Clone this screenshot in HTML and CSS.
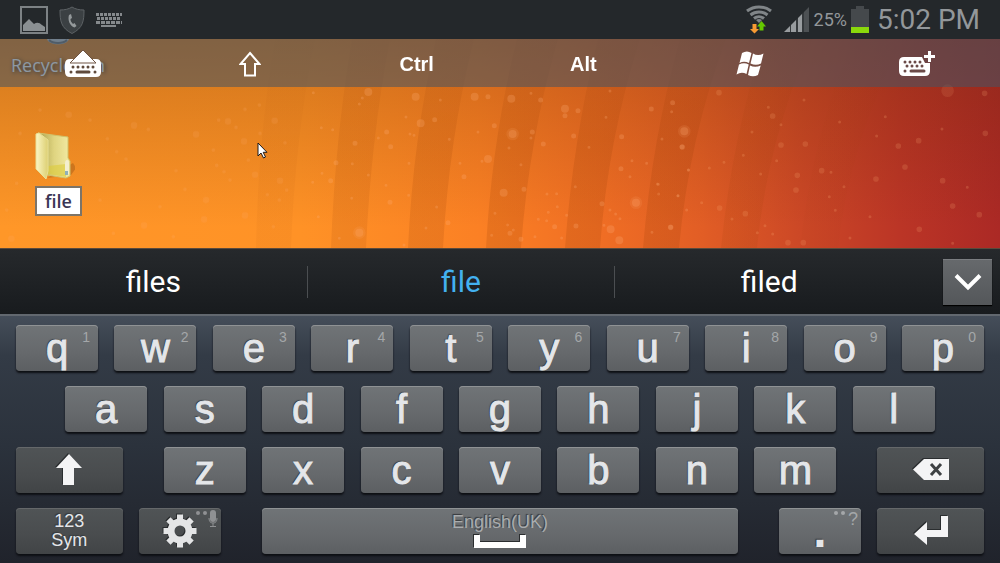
FILE: index.html
```html
<!doctype html>
<html lang="en">
<head>
    <meta charset="UTF-8">
    <title>Remote desktop</title>
    <link rel="stylesheet" href="styles.css">
</head>
<body>
    <header class="status">
        <div class="status-left">
            <svg width="28" height="28" viewBox="0 0 28 28">
                <rect x="1" y="1" width="26" height="26" fill="none" stroke="#7d8285" stroke-width="2"/>
                <path d="M3 25v-6l6-6 5 5q4-3 8 1l3 2v4z" fill="#8a8f92"/>
            </svg>
            <svg width="26" height="28" viewBox="0 0 26 28">
                <path d="M13 1c3 2 7 3 12 3 0 11-1 18-12 23.500C2 22 1 15 1 4c5 0 9-1 12-3z" fill="#3b4043" stroke="#5d6265"/>
                <path d="M10 9l2-1 1 4-1.500 1c0 2 1 3.500 2.500 5l1.500-1 2 3-2 1.500c-5-1.500-7-8-5.500-12.500z" fill="#94999b"/>
            </svg>
            <svg width="26" height="28" viewBox="0 0 26 28">
                <g stroke="#85898c" stroke-width="3" fill="none">
                    <path d="M0 8.500h26" stroke-dasharray="3 1"/>
                    <path d="M1 12.500h24" stroke-dasharray="3 1"/>
                    <path d="M0 16.500h26" stroke-dasharray="4 1"/>
                    <path d="M5 20h15" stroke-width="2"/>
                </g>
            </svg>
        </div>
        <div class="status-right">
            <svg width="26" height="29" viewBox="0 0 26 29">
                <g fill="none" stroke="#808588" stroke-width="3">
                    <path d="M1 6c7-5.500 17-5.500 24 0"/>
                    <path d="M4.500 10c5-4 12-4 17 0"/>
                    <path d="M8 13.500c3-2.500 7-2.500 10 0"/>
                </g>
                <path d="M13 18l-3-3c2-1.500 4-1.500 6 0z" fill="#808588"/>
                <path d="M6.500 19h4v5H13l-4.500 4.500L4 24h2.500z" fill="#f79a33"/>
                <path d="M13.500 25.500h4v-4H20L15.500 16 11 21.500h2.500z" fill="#65c800"/>
            </svg>
            <svg class="signal" width="25" height="25" viewBox="0 0 25 25">
                <path d="M0 25l6-6v6z" fill="#989c9f"/>
                <path d="M7 18l5-5v12H7z" fill="#989c9f"/>
                <path d="M14 11l4-4v18h-4z" fill="#989c9f"/>
                <path d="M20 5l5-5v25h-5z" fill="#4d5154"/>
                <path d="M6 19l1-1v7H6zM12 13l2-2v14h-2zM18 7l2-2v20h-2z" fill="#35393c"/>
            </svg>
            <span class="percent">25%</span>
            <svg class="battery" width="18" height="27" viewBox="0 0 18 27">
                <path d="M5 0h8v3h5v24H0V3h5z" fill="#45494c"/>
                <path d="M0 21h18v6H0z" fill="#8ad80c"/>
            </svg>
            <time class="clock">5:02 PM</time>
        </div>
    </header>

    <main class="desktop">
        <svg class="wallpaper" viewBox="0 0 1000 209" preserveAspectRatio="none">
            <defs>
                <linearGradient id="base">
                    <stop offset="0" stop-color="#ff9728"/>
                    <stop offset=".3" stop-color="#ff9226"/>
                    <stop offset=".48" stop-color="#fb8024"/>
                    <stop offset=".6" stop-color="#f06e24"/>
                    <stop offset=".7" stop-color="#e25e25"/>
                    <stop offset=".8" stop-color="#cc4826"/>
                    <stop offset=".9" stop-color="#bb3526"/>
                    <stop offset="1" stop-color="#ab2925"/>
                </linearGradient>
                <linearGradient id="shade" x2="0" y2="1">
                    <stop offset="0" stop-color="#5a2800" stop-opacity=".3"/>
                    <stop offset=".25" stop-color="#5a2800" stop-opacity=".2"/>
                    <stop offset=".9" stop-color="#5a2800" stop-opacity="0"/>
                </linearGradient>
                <linearGradient id="band" x2="0" y2="1">
                    <stop offset="0" stop-color="#903800" stop-opacity=".06"/>
                    <stop offset=".5" stop-color="#903800" stop-opacity=".16"/>
                    <stop offset="1" stop-color="#903800" stop-opacity=".17"/>
                </linearGradient>
            </defs>
            <rect width="1000" height="209" fill="url(#base)"/>
            <rect width="1000" height="209" fill="url(#shade)"/>
            <!-- rays -->
            <g fill="url(#band)">
                <path opacity=".3" d="M275 0h40q-20 100-24 209h-35q2-109 19-209z"/>
                <path opacity=".7" d="M352 0h38q-19 100-24 209h-35q4-109 21-209z"/>
                <path opacity=".9" d="M436 0h38q-25 100-31 209h-35q5-109 28-209z"/>
                <path d="M517 0h41q-29 100-37 209h-35q6-109 31-209z"/>
                <path d="M598 0h42q-32 100-40 209h-35q8-109 33-209z"/>
                <path d="M680 0h46q-37 100-47 209h-36q9-109 37-209z"/>
                <path opacity=".6" d="M764 0h48q-44 100-55 209h-36q11-109 43-209z"/>
                <path opacity=".2" d="M852 0h52q-54 100-66 209h-38q12-109 52-209z"/>
            </g>
            <!-- dust -->
            <g fill="none" stroke="#ffb27a" stroke-linecap="round" opacity=".7">
                <g transform="translate(300 -9) scale(.3333)">
                    <path opacity=".35" stroke-width="24" d="M347 200h0M524 200h0M634 206h0M362 280h0M638 312h0M795 236h0M564 387h0M611 488h0M178 608h0M932 598h0M958 631h0M1008 518h0M1153 304h0M205 186h0"/>
                    <path opacity=".18" stroke-width="38" d="M1008 518h0M1153 304h0M178 608h0M638 312h0M1943 182h0"/>
                    <path opacity=".35" stroke-width="15" d="M404 269h0M583 287h0M730 342h0M821 318h0M272 350h0M108 398h0M92 452h0M270 517h0M795 257h0M834 242h0M1054 237h0M1146 351h0M963 416h0M444 578h0M663 628h0M630 610h0M764 590h0M828 588h0M906 521h0M697 306h0M672 478h0M965 320h0M1112 592h0M165 340h0M564 200h0M492 440h0M1118 218h0M722 210h0M260 306h0"/>
                    <path opacity=".35" stroke-width="9" d="M66 430h0M38 457h0M64 293h0M98 299h0M178 222h0M187 204h0M318 261h0M421 210h0M235 324h0M330 312h0M342 316h0M157 401h0M205 435h0M258 466h0M326 496h0M410 531h0M378 594h0M327 400h0M448 328h0M480 400h0M534 306h0M546 394h0M627 354h0M693 324h0M693 190h0M930 183h0M918 262h0M867 352h0M663 404h0M826 470h0M770 491h0M741 492h0M745 547h0M740 572h0M715 568h0M772 530h0M800 556h0M585 550h0M575 616h0M623 585h0M640 600h0M785 624h0M705 620h0M930 540h0M947 552h0M960 566h0M912 586h0M1040 400h0M1075 463h0M1134 497h0M1165 420h0M1086 327h0M1115 245h0M1056 607h0M1160 540h0M996 392h0M990 440h0M312 645h0M155 505h0M118 625h0M55 560h0M40 188h0"/>
                </g>
                <g transform="translate(650 -9) scale(.3333)">
                    <path opacity=".25" stroke-width="17" d="M207 188h0M368 258h0M393 345h0M466 342h0M442 436h0M745 348h0M806 332h0M765 411h0M678 447h0M878 452h0M908 528h0M988 554h0M209 534h0M286 551h0M62 592h0M1004 190h0M414 638h0M460 638h0M515 422h0M808 598h0M97 351h0M1006 310h0M438 480h0"/>
                    <path opacity=".3" stroke-width="9" d="M355 232h0M393 284h0M462 210h0M306 306h0M280 376h0M222 397h0M332 432h0M380 392h0M543 427h0M569 276h0M680 318h0M556 541h0M538 500h0M582 470h0M322 608h0M345 587h0M368 612h0M246 567h0M600 624h0M26 492h0M84 497h0M116 420h0M178 414h0M22 462h0M952 472h0M876 297h0M706 260h0M908 640h0M660 560h0M155 518h0"/>
                </g>
                <g transform="translate(0 61) scale(.3333)">
                    <path opacity=".22" stroke-width="20" d="M588 103h0M684 64h0M732 124h0M402 76h0M618 300h0M612 358h0M735 346h0M206 44h0M824 62h0M765 224h0M840 242h0M34 416h0M432 376h0"/>
                    <path opacity=".25" stroke-width="11" d="M445 88h0M350 155h0M378 177h0M322 116h0M735 28h0M778 15h0M708 82h0M656 60h0M650 196h0M672 215h0M855 128h0M780 100h0M802 284h0M838 300h0M745 180h0M555 268h0M480 320h0M300 300h0M528 212h0M640 150h0M270 60h0M120 30h0M60 100h0M50 250h0M860 270h0M690 240h0M20 330h0M340 400h0M520 410h0M820 380h0"/>
                </g>
            </g>
        </svg>

        <div class="bin">
            <svg width="26" height="30" viewBox="0 0 26 30">
                <path d="M2 0h22v24c-2 7-20 7-22 0z" fill="#a9b4bd"/>
                <path d="M4 25c4 4 14 4 18 0" fill="none" stroke="#5f676d" stroke-width="2"/>
            </svg>
            <span>Recycle Bin</span>
        </div>

        <div class="folder">
            <svg width="40" height="52" viewBox="0 0 40 52">
                <defs>
                    <linearGradient id="back"><stop offset="0" stop-color="#a9a04c"/><stop offset=".5" stop-color="#dfd480"/><stop offset="1" stop-color="#f3eba4"/></linearGradient>
                    <linearGradient id="flap"><stop offset="0" stop-color="#fbf6c4"/><stop offset="1" stop-color="#dccf72"/></linearGradient>
                </defs>
                <path d="M12 46l24-3 5-7-3-5z" fill="#8a4a10" opacity=".35"/>
                <path d="M3 1l30 4v21l2 3v15l-4 2-19-3z" fill="url(#back)" stroke="#cfc26b"/>
                <path d="M13 34l18-2v13l-18-3z" fill="#dccb3a" opacity=".6"/>
                <path d="M1 2l3-1 9 7v31l-2 8-10-10z" fill="url(#flap)" stroke="#e8df95"/>
                <path d="M30 32q0-4 2-4t2 4v10h-4z" fill="#f4efcf"/>
                <path d="M30 39h3v4h-3z" fill="#8fb0b8"/>
            </svg>
            <input type="text" class="rename" value="file" aria-label="Folder name">
        </div>

        <svg class="cursor" width="11" height="18" viewBox="0 0 11 18">
            <path d="M1 1v13l3-3 2.500 5 2-1-2.300-4.700H10z" fill="#fff" stroke="#1d1a1a"/>
        </svg>

        <nav class="toolbar">
            <button type="button" aria-label="Hide keyboard">
                <svg width="36" height="28" viewBox="0 0 36 28">
                    <path d="M5 9h26q5 0 5 5v8q0 5-5 5H5q-5 0-5-5v-8q0-5 5-5z" fill="#fff"/>
                    <path d="M18 0l13 13H5z" fill="#fff" stroke="#6e5444"/>
                    <g stroke="#5f4a3c" stroke-width="3" stroke-linecap="round">
                        <path d="M8 17h0M13 17h0M18 17h0M23 17h0M28 17h0M6 22h0M30 22h0M12 22h12"/>
                    </g>
                </svg>
            </button>
            <button type="button" aria-label="Shift">
                <svg width="22" height="26" viewBox="0 0 22 26">
                    <path d="M11 2l9.500 11H16v11.500H6V13H1.500z" fill="none" stroke="#fff" stroke-width="2"/>
                </svg>
            </button>
            <button type="button">Ctrl</button>
            <button type="button">Alt</button>
            <button type="button" aria-label="Windows">
                <svg width="28" height="26" viewBox="0 0 28 26">
                    <g fill="#fff">
                        <path d="M6 2q5-3 9.500 0l-2.500 10q-5-2.500-9.500 0z"/>
                        <path d="M17 2.500q5 3 10.500 0l-2.500 10q-5 2.500-10.500 0z"/>
                        <path d="M3 13.500q5-2.500 9.700 0l-2.200 9.500q-5-2.500-10 .5z"/>
                        <path d="M14 14.500q5 2.500 10.700 0l-2.700 9.500q-5 2.500-10 0z"/>
                    </g>
                </svg>
            </button>
            <button type="button" aria-label="More keys">
                <svg width="36" height="26" viewBox="0 0 36 26">
                    <path d="M5 6h18l3 6h5v8q0 5-5 5H5q-5 0-5-5v-9q0-5 5-5z" fill="#fff"/>
                    <g stroke="#6b4a48" stroke-width="3" stroke-linecap="round">
                        <path d="M6 11h0M11 11h0M16 11h0M21 11h0M8 15h0M13 15h0M18 15h0M23 15h0M6 20h0M12 20h13"/>
                    </g>
                    <path d="M30.500 0v11M25 5.500h11" stroke="#fff" stroke-width="3"/>
                </svg>
            </button>
        </nav>
    </main>

    <section class="suggestions">
        <button type="button" class="word">files</button>
        <button type="button" class="word active">file</button>
        <button type="button" class="word">filed</button>
        <button type="button" class="expand" aria-label="More suggestions">
            <svg width="28" height="19" viewBox="0 0 28 19">
                <path d="M2 2.500l12 12 12-12" fill="none" stroke="#fff" stroke-width="4"/>
            </svg>
        </button>
    </section>

    <section class="keyboard">
        <div class="row">
            <button type="button" class="key">q<span class="hint">1</span></button>
            <button type="button" class="key">w<span class="hint">2</span></button>
            <button type="button" class="key">e<span class="hint">3</span></button>
            <button type="button" class="key">r<span class="hint">4</span></button>
            <button type="button" class="key">t<span class="hint">5</span></button>
            <button type="button" class="key">y<span class="hint">6</span></button>
            <button type="button" class="key">u<span class="hint">7</span></button>
            <button type="button" class="key">i<span class="hint">8</span></button>
            <button type="button" class="key">o<span class="hint">9</span></button>
            <button type="button" class="key">p<span class="hint">0</span></button>
        </div>
        <div class="row row-home">
            <button type="button" class="key">a</button>
            <button type="button" class="key">s</button>
            <button type="button" class="key">d</button>
            <button type="button" class="key">f</button>
            <button type="button" class="key">g</button>
            <button type="button" class="key">h</button>
            <button type="button" class="key">j</button>
            <button type="button" class="key">k</button>
            <button type="button" class="key">l</button>
        </div>
        <div class="row row-bottom">
            <button type="button" class="key dark wide" aria-label="Shift">
                <svg width="26" height="32" viewBox="0 0 26 32">
                    <path d="M13 0l13 14h-8v17H7V14H0z" fill="#f4f4f5"/>
                </svg>
            </button>
            <button type="button" class="key">z</button>
            <button type="button" class="key">x</button>
            <button type="button" class="key">c</button>
            <button type="button" class="key">v</button>
            <button type="button" class="key">b</button>
            <button type="button" class="key">n</button>
            <button type="button" class="key">m</button>
            <button type="button" class="key dark wide" aria-label="Backspace">
                <svg width="36" height="22" viewBox="0 0 36 22">
                    <path d="M11 0h25v21H11L0 10.500z" fill="#f4f4f5"/>
                    <path d="M18 5l10 11M28 5L18 16" stroke="#3e4143" stroke-width="3"/>
                </svg>
            </button>
        </div>
        <div class="row row-space">
            <button type="button" class="key dark wide sym">123<br>Sym</button>
            <button type="button" class="key dark" aria-label="Settings">
                <svg width="34" height="34" viewBox="-17 -17 34 34">
                    <circle r="9" fill="none" stroke="#e4e5e6" stroke-width="7"/>
                    <path d="M0-16.500v6M0 10.500v6M-16.500 0h6M10.500 0h6M-11.600-11.600l4 4M7.600 7.600l4 4M-11.600 11.600l4-4M7.600-7.600l4-4" stroke="#e4e5e6" stroke-width="6"/>
                </svg>
                <span class="corner">
                    <svg width="22" height="18" viewBox="0 0 22 18">
                        <circle cx="2" cy="3" r="2" fill="#8f9193"/>
                        <circle cx="9" cy="3" r="2" fill="#8f9193"/>
                        <path d="M17 3v6" stroke="#8f9193" stroke-width="6" stroke-linecap="round"/>
                        <path d="M13 8q0 5 4 5t4-5M17 13v3M14 16.500h6" fill="none" stroke="#8f9193"/>
                    </svg>
                </span>
            </button>
            <button type="button" class="key space">
                English(UK)
                <svg width="52" height="13" viewBox="0 0 52 13">
                    <path d="M0 0h6v7h40V0h6v13H0z" fill="#fff"/>
                </svg>
            </button>
            <button type="button" class="key period">.
                <span class="corner">
                    <svg width="12" height="18" viewBox="0 0 12 18">
                        <circle cx="2" cy="3" r="2" fill="#a4a7a9"/>
                        <circle cx="9" cy="3" r="2" fill="#a4a7a9"/>
                    </svg>?
                </span>
            </button>
            <button type="button" class="key dark wide" aria-label="Enter">
                <svg width="34" height="30" viewBox="0 0 34 30">
                    <path d="M27 0h7v21H13v8L0 18 13 6v8h14z" fill="#f4f4f5"/>
                </svg>
            </button>
        </div>
    </section>
</body>
</html>
```
FILE: styles.css
```css
* {
    box-sizing: border-box;
}

body {
    margin: 0;
    min-height: 100vh;
    display: flex;
    flex-direction: column;
    background-color: #20242c;
    font-family: "Liberation Sans", Arial, sans-serif;
}

svg {
    display: block;
    flex: none;
}

button {
    margin: 0;
    padding: 0;
    border: 0;
    background: none;
    color: #fff;
    font-family: inherit;
    cursor: pointer;
}

/* status bar */
.status {
    height: 39px;
    padding: 0 20px;
    display: flex;
    justify-content: space-between;
    align-items: center;
    background-color: #24282b;
    color: #93979a;
    font-family: Roboto, sans-serif;
}

.status-left {
    display: flex;
    gap: 11px;
}

.status-right {
    display: flex;
    align-items: center;
}

.signal {
    margin: 0 5px 0 12px;
}

.percent {
    font-size: 18px;
}

.battery {
    margin: 0 8px 0 4px;
}

.clock {
    font-size: 28px;
    line-height: 39px;
}

/* remote desktop */
.desktop {
    position: relative;
    flex: 1;
    min-height: 209px;
    overflow: hidden;
}

.wallpaper {
    position: absolute;
    width: 100%;
    height: 100%;
}

.toolbar {
    position: relative;
    height: 48px;
    padding-top: 2px;
    display: grid;
    grid-template-columns: repeat(6, 1fr);
    background-color: rgba(68, 84, 100, 0.55);
}

.toolbar button {
    display: flex;
    align-items: center;
    justify-content: center;
    font-size: 20px;
    font-weight: bold;
}

.bin {
    position: absolute;
    top: -24px;
    left: 11px;
    display: flex;
    flex-direction: column;
    align-items: center;
    gap: 8px;
    color: #e6eaee;
    font-family: "Open Sans", "Noto Sans", sans-serif;
    font-size: 18px;
    line-height: 24px;
    text-shadow: 1px 1px 4px #000;
}

.folder {
    position: absolute;
    top: 93px;
    left: 35px;
}

.rename {
    display: block;
    width: 47px;
    height: 30px;
    margin-top: 2px;
    padding: 0;
    border: 2px solid #7c7468;
    background-color: #fff;
    color: #3a3654;
    font-family: "Open Sans", "Noto Sans", sans-serif;
    font-size: 18px;
    font-weight: 600;
    text-align: center;
}

.cursor {
    position: absolute;
    top: 103px;
    left: 257px;
}

/* word suggestions */
.suggestions {
    height: 66px;
    display: grid;
    grid-template-columns: 4fr 4fr 4fr 1fr;
    align-items: center;
    border-top: 1px solid #5a4a3c;
    background: linear-gradient(#26292c, #181b1e);
}

.word {
    height: 32px;
    font-family: Roboto, sans-serif;
    font-size: 30px;
    line-height: 32px;
    border-right: 1px solid #4b4e51;
}

.word:nth-child(3) {
    border-right: 0;
}

.active {
    color: #43b1f0;
}

.expand {
    width: 49px;
    height: 46px;
    margin-right: 8px;
    justify-self: end;
    display: flex;
    align-items: center;
    justify-content: center;
    border-top: 1px solid #7b7e81;
    background: linear-gradient(#66696c, #54575a);
    box-shadow: 0 1px 1px #000;
}

/* keyboard */
.keyboard {
    padding: 9px 16px;
    display: flex;
    flex-direction: column;
    gap: 15px;
    border-top: 2px solid #62686f;
    background: linear-gradient(#454e5a, #333b46 40px, #2b323c 130px, #20232b);
}

/* 118 half units: a letter is 10 wide, the gap after it is 2 */
.row {
    display: grid;
    grid-template-columns: repeat(118, minmax(0, 1fr));
}

.key {
    position: relative;
    grid-column-end: span 10;
    height: 46px;
    border-radius: 4px;
    background: linear-gradient(#707477, #66696c 60%, #5c5f62);
    box-shadow: inset 0 1px 0 #8f9294, 0 2px 2px #0d0f13;
    color: #e4e6e9;
    font-size: 40px;
    line-height: 46px;
    -webkit-text-stroke: 1px #e4e6e9;
    text-shadow: -1px -1px 1px #35383b;
}

.key > svg {
    margin: 0 auto;
    filter: drop-shadow(-1px -1px 0 #2a2d2f);
}

.key:nth-child(1) { grid-column-start: 1; }
.key:nth-child(2) { grid-column-start: 13; }
.key:nth-child(3) { grid-column-start: 25; }
.key:nth-child(4) { grid-column-start: 37; }
.key:nth-child(5) { grid-column-start: 49; }
.key:nth-child(6) { grid-column-start: 61; }
.key:nth-child(7) { grid-column-start: 73; }
.key:nth-child(8) { grid-column-start: 85; }
.key:nth-child(9) { grid-column-start: 97; }
.key:nth-child(10) { grid-column-start: 109; }

.row-home .key:nth-child(1) { grid-column-start: 7; }
.row-home .key:nth-child(2) { grid-column-start: 19; }
.row-home .key:nth-child(3) { grid-column-start: 31; }
.row-home .key:nth-child(4) { grid-column-start: 43; }
.row-home .key:nth-child(5) { grid-column-start: 55; }
.row-home .key:nth-child(6) { grid-column-start: 67; }
.row-home .key:nth-child(7) { grid-column-start: 79; }
.row-home .key:nth-child(8) { grid-column-start: 91; }
.row-home .key:nth-child(9) { grid-column-start: 103; }

.row-bottom .key:nth-child(2) { grid-column-start: 19; }
.row-bottom .key:nth-child(3) { grid-column-start: 31; }
.row-bottom .key:nth-child(4) { grid-column-start: 43; }
.row-bottom .key:nth-child(5) { grid-column-start: 55; }
.row-bottom .key:nth-child(6) { grid-column-start: 67; }
.row-bottom .key:nth-child(7) { grid-column-start: 79; }
.row-bottom .key:nth-child(8) { grid-column-start: 91; }
.row-bottom .key:nth-child(9) { grid-column-start: 106; }

.row-space .key:nth-child(2) { grid-column-start: 16; }
.row-space .key:nth-child(3) { grid-column-start: 31; }
.row-space .key:nth-child(4) { grid-column-start: 94; }
.row-space .key:nth-child(5) { grid-column-start: 106; }

.wide {
    grid-column-end: span 13;
}

.dark {
    background: linear-gradient(#505456, #494c4e 60%, #414446);
    box-shadow: inset 0 1px 0 #65686a, 0 2px 2px #0d0f13;
}

.hint {
    position: absolute;
    top: 4px;
    right: 8px;
    color: #a4a7a9;
    font-size: 14px;
    line-height: 16px;
    -webkit-text-stroke: 0;
    text-shadow: none;
}

.corner {
    position: absolute;
    top: 2px;
    right: 3px;
    display: flex;
    gap: 2px;
    color: #a4a7a9;
    font-size: 18px;
    font-weight: normal;
    line-height: 18px;
    -webkit-text-stroke: 0;
    text-shadow: none;
}

.sym {
    font-size: 18px;
    line-height: 19px;
    -webkit-text-stroke: 0;
}

.space {
    grid-column-end: span 58;
    display: flex;
    flex-direction: column;
    align-items: center;
    padding-top: 4px;
    gap: 3px;
    color: #a9acae;
    font-size: 18px;
    line-height: 20px;
    -webkit-text-stroke: 0;
}

.period {
    font-size: 48px;
    font-weight: bold;
    -webkit-text-stroke: 0;
}
```
